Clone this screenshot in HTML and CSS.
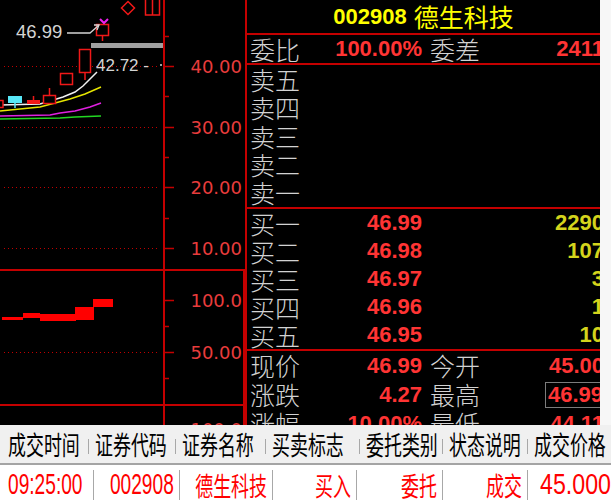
FILE: index.html
```html
<!DOCTYPE html>
<html lang="zh-CN">
<head>
<meta charset="utf-8">
<title>德生科技 002908</title>
<link rel="stylesheet" href="styles.css">
</head>
<body>
<main class="screen">
  <svg class="chart" width="247" height="425" viewBox="0 0 247 425" xmlns="http://www.w3.org/2000/svg">
    <g class="grid-dots">
      <line x1="4" y1="66.5" x2="160" y2="66.5"/>
      <line x1="4" y1="127.5" x2="160" y2="127.5"/>
      <line x1="4" y1="187.5" x2="160" y2="187.5"/>
      <line x1="4" y1="248.5" x2="160" y2="248.5"/>
      <line x1="4" y1="352.5" x2="160" y2="352.5"/>
    </g>
    <g class="frame">
      <line x1="164" y1="0" x2="164" y2="425"/>
      <line x1="246" y1="0" x2="246" y2="425"/>
      <line x1="0" y1="270" x2="246" y2="270"/>
      <line x1="0" y1="405" x2="246" y2="405"/>
      <line x1="244" y1="270" x2="244" y2="425"/>
    </g>
    <g class="ticks">
      <line x1="164" y1="66.5" x2="174" y2="66.5"/>
      <line x1="164" y1="127.5" x2="174" y2="127.5"/>
      <line x1="164" y1="187.5" x2="174" y2="187.5"/>
      <line x1="164" y1="248.5" x2="174" y2="248.5"/>
      <line x1="164" y1="36.5" x2="169" y2="36.5"/>
      <line x1="164" y1="96.5" x2="169" y2="96.5"/>
      <line x1="164" y1="157.5" x2="169" y2="157.5"/>
      <line x1="164" y1="218.5" x2="169" y2="218.5"/>
      <line x1="164" y1="300.5" x2="174" y2="300.5"/>
      <line x1="164" y1="352.5" x2="174" y2="352.5"/>
      <line x1="164" y1="326.5" x2="169" y2="326.5"/>
      <line x1="164" y1="378.5" x2="169" y2="378.5"/>
    </g>
    <g class="axis-labels">
      <text x="242" y="72.5">40.00</text>
      <text x="242" y="133.5">30.00</text>
      <text x="242" y="193.5">20.00</text>
      <text x="242" y="254.5">10.00</text>
      <text x="242" y="306.5">100.0</text>
      <text x="242" y="358.5">50.00</text>
      <text x="242" y="436">100.0</text>
    </g>

    <!-- moving averages -->
    <polyline class="ma ma-green" points="0,119 60,118 75,117 101,116"/>
    <polyline class="ma ma-magenta" points="0,116 50,115 60,113 75,111 90,107 101,103"/>
    <polyline class="ma ma-yellow" points="0,111 40,107 55,103 70,99 85,94 101,87"/>
    <polyline class="ma ma-white" points="0,105 40,104 50,101 63,97 75,92 83,86 90,79 97,72"/>

    <!-- candles -->
    <g class="candle-up">
      <rect x="-1" y="100.5" width="4" height="7"/>
      <rect x="43.5" y="95.5" width="12" height="8"/>
      <line x1="49.5" y1="88" x2="49.5" y2="95.5"/>
      <rect x="60.5" y="73.5" width="12" height="11"/>
      <rect x="79.5" y="49.5" width="11" height="23"/>
      <line x1="85" y1="72.5" x2="85" y2="80"/>
      <rect x="96.5" y="24.5" width="12" height="11"/>
      <line x1="102.5" y1="35.5" x2="102.5" y2="41"/>
      <polygon points="128,1.5 134.5,8 128,14.5 121.5,8"/>
      <rect x="145.5" y="-1" width="14" height="16"/>
      <line x1="152.5" y1="0" x2="152.5" y2="15"/>
    </g>
    <rect class="candle-fill" x="27" y="100" width="13" height="4"/>
    <line class="candle-wick" x1="33.5" y1="96" x2="33.5" y2="100"/>
    <rect class="candle-cyan" x="8" y="96" width="14" height="7"/>
    <line class="candle-cyan-wick" x1="15" y1="103" x2="15" y2="108"/>
    <polyline class="mark" points="100,19 104,23 108,19"/>
    <rect class="last-bar" x="91" y="43" width="72" height="5"/>

    <!-- labels on chart -->
    <text class="chart-note note-big" x="16" y="38">46.99</text>
    <polyline class="note-line" points="67,33 90,33 99,25"/>
    <polyline class="note-line" points="94,25 99,25 97,30"/>
    <text class="chart-note" x="96" y="71">42.72 -</text>
    <circle class="note-dot" cx="161" cy="65" r="1"/>

    <!-- lower pane bars -->
    <g class="vol">
      <rect x="2" y="317" width="21" height="3"/>
      <rect x="23" y="313" width="17" height="5"/>
      <rect x="40" y="314" width="36" height="7"/>
      <rect x="75" y="307" width="19" height="13"/>
      <rect x="93" y="299" width="20" height="8"/>
    </g>
  </svg>

  <section class="quote">
    <header class="q-title"><span class="q-code">002908</span><span class="q-name">德生科技</span></header>

    <div class="q-row q-ratio">
      <div class="q-cell"><span class="q-lbl">委比</span><span class="q-num">100.00%</span></div>
      <div class="q-cell"><span class="q-lbl">委差</span><span class="q-num">2411</span></div>
    </div>

    <div class="q-block q-sell">
      <div class="q-row"><div class="q-cell"><span class="q-lbl">卖五</span></div></div>
      <div class="q-row"><div class="q-cell"><span class="q-lbl">卖四</span></div></div>
      <div class="q-row"><div class="q-cell"><span class="q-lbl">卖三</span></div></div>
      <div class="q-row"><div class="q-cell"><span class="q-lbl">卖二</span></div></div>
      <div class="q-row"><div class="q-cell"><span class="q-lbl">卖一</span></div></div>
    </div>

    <div class="q-block q-buy">
      <div class="q-row"><div class="q-cell"><span class="q-lbl">买一</span><span class="q-num">46.99</span></div><div class="q-cell q-end"><span class="q-vol">2290</span></div></div>
      <div class="q-row"><div class="q-cell"><span class="q-lbl">买二</span><span class="q-num">46.98</span></div><div class="q-cell q-end"><span class="q-vol">107</span></div></div>
      <div class="q-row"><div class="q-cell"><span class="q-lbl">买三</span><span class="q-num">46.97</span></div><div class="q-cell q-end"><span class="q-vol">3</span></div></div>
      <div class="q-row"><div class="q-cell"><span class="q-lbl">买四</span><span class="q-num">46.96</span></div><div class="q-cell q-end"><span class="q-vol">1</span></div></div>
      <div class="q-row"><div class="q-cell"><span class="q-lbl">买五</span><span class="q-num">46.95</span></div><div class="q-cell q-end"><span class="q-vol">10</span></div></div>
    </div>

    <div class="q-block q-stats">
      <div class="q-row"><div class="q-cell"><span class="q-lbl">现价</span><span class="q-num">46.99</span></div><div class="q-cell"><span class="q-lbl">今开</span><span class="q-num">45.00</span></div></div>
      <div class="q-row"><div class="q-cell"><span class="q-lbl">涨跌</span><span class="q-num">4.27</span></div><div class="q-cell"><span class="q-lbl">最高</span><span class="q-num q-boxed">46.99</span></div></div>
      <div class="q-row"><div class="q-cell"><span class="q-lbl">涨幅</span><span class="q-num">10.00%</span></div><div class="q-cell"><span class="q-lbl">最低</span><span class="q-num">44.11</span></div></div>
    </div>
  </section>

  <div class="edge"></div>
</main>

<section class="orders">
  <div class="o-head">
    <div class="o-h o-h-first"><span class="o-ht">成交时间</span></div>
    <div class="o-h o-w87"><i class="o-sep"></i><span class="o-ht">证券代码</span></div>
    <div class="o-h o-w90"><i class="o-sep"></i><span class="o-ht">证券名称</span></div>
    <div class="o-h o-w94"><i class="o-sep"></i><span class="o-ht">买卖标志</span></div>
    <div class="o-h o-w83"><i class="o-sep"></i><span class="o-ht">委托类别</span></div>
    <div class="o-h o-w85"><i class="o-sep"></i><span class="o-ht">状态说明</span></div>
    <div class="o-h o-last"><i class="o-sep"></i><span class="o-ht">成交价格</span></div>
  </div>
  <div class="o-row">
    <div class="o-c o-c-left"><span class="o-d o-dl">09:25:00</span></div>
    <div class="o-c"><span class="o-d">002908</span></div>
    <div class="o-c"><span class="o-t">德生科技</span></div>
    <div class="o-c"><span class="o-t">买入</span></div>
    <div class="o-c"><span class="o-t">委托</span></div>
    <div class="o-c"><span class="o-t">成交</span></div>
    <div class="o-c o-c-price"><span class="o-d o-dp">45.000</span></div>
  </div>
</section>
</body>
</html>
```

FILE: styles.css
```css
* { box-sizing: border-box; margin: 0; padding: 0; }

html, body {
  width: 611px;
  height: 500px;
  overflow: hidden;
  background: #ffffff;
}

body {
  font-family: "Liberation Sans", "Noto Sans CJK SC", sans-serif;
}

/* ---------- top black screen ---------- */
.screen {
  display: flex;
  height: 425px;
  background: #000;
}

.chart {
  display: block;
  flex: none;
  width: 247px;
  height: 425px;
}

.grid-dots line {
  stroke: #c00000;
  stroke-width: 1;
  stroke-dasharray: 1 3;
}

.frame line {
  stroke: #c40000;
  stroke-width: 2;
}

.ticks line {
  stroke: #c40000;
  stroke-width: 1.5;
}

.axis-labels text {
  font-family: "DejaVu Sans", sans-serif;
  font-size: 18px;
  fill: #e83c3c;
  text-anchor: end;
}

.ma { fill: none; stroke-width: 1.5; }
.ma-green { stroke: #22d822; }
.ma-magenta { stroke: #e020e0; }
.ma-yellow { stroke: #e6e600; }
.ma-white { stroke: #f0f0f0; }

.candle-up rect,
.candle-up polygon { fill: #000; stroke: #f01818; stroke-width: 1.5; }
.candle-up line { stroke: #f01818; stroke-width: 1.5; }
.candle-fill { fill: #f01818; }
.candle-wick { stroke: #f01818; stroke-width: 1.5; }
.candle-cyan { fill: #58e8f8; }
.candle-cyan-wick { stroke: #58e8f8; stroke-width: 1.5; }
.mark { fill: none; stroke: #f020f0; stroke-width: 2; }
.last-bar { fill: #a0a0a0; }

.chart-note {
  font-family: "Liberation Sans", sans-serif;
  font-size: 17px;
  fill: #d4d4d4;
}
.note-big { font-size: 18.5px; }
.note-line { fill: none; stroke: #d4d4d4; stroke-width: 1.3; }
.note-dot { fill: #d4d4d4; }

.vol rect { fill: #ff0000; }

/* ---------- quote panel ---------- */
.quote {
  flex: none;
  width: 353px;
  height: 425px;
  display: flex;
  flex-direction: column;
  overflow: hidden;
}

.q-title {
  flex: none;
  height: 35px;
  border-bottom: 2px solid #c40000;
  display: flex;
  justify-content: center;
  align-items: center;
  gap: 7px;
  color: #ffff00;
}

.q-code {
  font-family: "Liberation Sans", sans-serif;
  font-weight: bold;
  font-size: 22px;
}

.q-name {
  font-family: "Noto Sans CJK SC", sans-serif;
  font-size: 25px;
  line-height: 1;
}

.q-row {
  display: grid;
  grid-template-columns: 172px 174px;
  column-gap: 8px;
  align-items: center;
  padding-left: 3px;
  flex: 1;
  min-height: 0;
}

.q-ratio {
  flex: none;
  height: 30px;
  border-bottom: 2px solid #c40000;
}

.q-block {
  flex: none;
  display: flex;
  flex-direction: column;
  border-bottom: 2px solid #c40000;
}

.q-sell { height: 144px; }
.q-buy { height: 142px; }
.q-stats {
  flex: 1;
  border-bottom: 0;
}
.q-stats .q-row {
  flex: none;
  height: 29px;
}

.q-cell {
  display: flex;
  justify-content: space-between;
  align-items: center;
  white-space: nowrap;
}

.q-end { justify-content: flex-end; }

.q-lbl {
  font-family: "Noto Sans CJK SC", sans-serif;
  font-size: 25px;
  font-weight: 300;
  line-height: 1;
  color: #d2d2d2;
}

.q-num {
  font-family: "Liberation Sans", sans-serif;
  font-weight: bold;
  font-size: 22px;
  line-height: 22px;
  color: #ff3434;
}

.q-vol {
  font-family: "Liberation Sans", sans-serif;
  font-weight: bold;
  font-size: 22px;
  line-height: 22px;
  color: #d4d41c;
}

.q-boxed {
  border: 1px solid #7c7c7c;
  padding: 1px 0 1px 2px;
  line-height: 22px;
}

.edge {
  flex: 1;
  background: #f7f7f7;
}

/* ---------- orders table ---------- */
.orders {
  height: 75px;
  overflow: hidden;
  background: #fff;
}

.o-head {
  display: flex;
  height: 40px;
  background: #f0f0f0;
  border-bottom: 2px solid #a4a4a4;
  overflow: hidden;
}

.o-h {
  flex: none;
  display: flex;
  align-items: center;
  gap: 6px;
  overflow: visible;
}

.o-h-first { width: 88px; padding-left: 8px; }
.o-w87 { width: 87px; }
.o-w90 { width: 90px; }
.o-w94 { width: 94px; }
.o-w83 { width: 83px; }
.o-w85 { width: 85px; }
.o-last { flex: 1; }

.o-sep {
  flex: none;
  display: block;
  width: 1px;
  height: 15px;
  margin-top: 4px;
  background: #a8a8a8;
}

.o-ht {
  flex: none;
  display: inline-block;
  font-family: "Noto Sans CJK SC", sans-serif;
  font-size: 26px;
  line-height: 1;
  color: #000;
  white-space: nowrap;
  transform: scaleX(0.69);
  transform-origin: left center;
}

.o-row {
  display: grid;
  grid-template-columns: 94px 86px 93px 84px 86px 85px 1fr;
  height: 35px;
  padding-top: 5px;
}

.o-c {
  display: flex;
  justify-content: flex-end;
  align-items: center;
  padding-right: 5px;
  padding-bottom: 3px;
  border-right: 1px solid #a8a8a8;
  white-space: nowrap;
  min-width: 0;
}

.o-c-left {
  justify-content: flex-start;
  padding-left: 8px;
}

.o-c-price {
  justify-content: flex-start;
  padding-left: 12px;
  border-right: 0;
}

.o-d {
  flex: none;
  display: inline-block;
  font-family: "Liberation Sans", sans-serif;
  font-size: 29px;
  line-height: 1;
  color: #ff0000;
  transform: scaleX(0.66);
  transform-origin: right center;
}

.o-dl { transform-origin: left center; }
.o-dp { transform-origin: left center; transform: scaleX(0.8); }

.o-t {
  flex: none;
  display: inline-block;
  font-family: "Noto Sans CJK SC", sans-serif;
  font-size: 26px;
  line-height: 1;
  color: #ff0000;
  transform: scaleX(0.69);
  transform-origin: right center;
}
```
